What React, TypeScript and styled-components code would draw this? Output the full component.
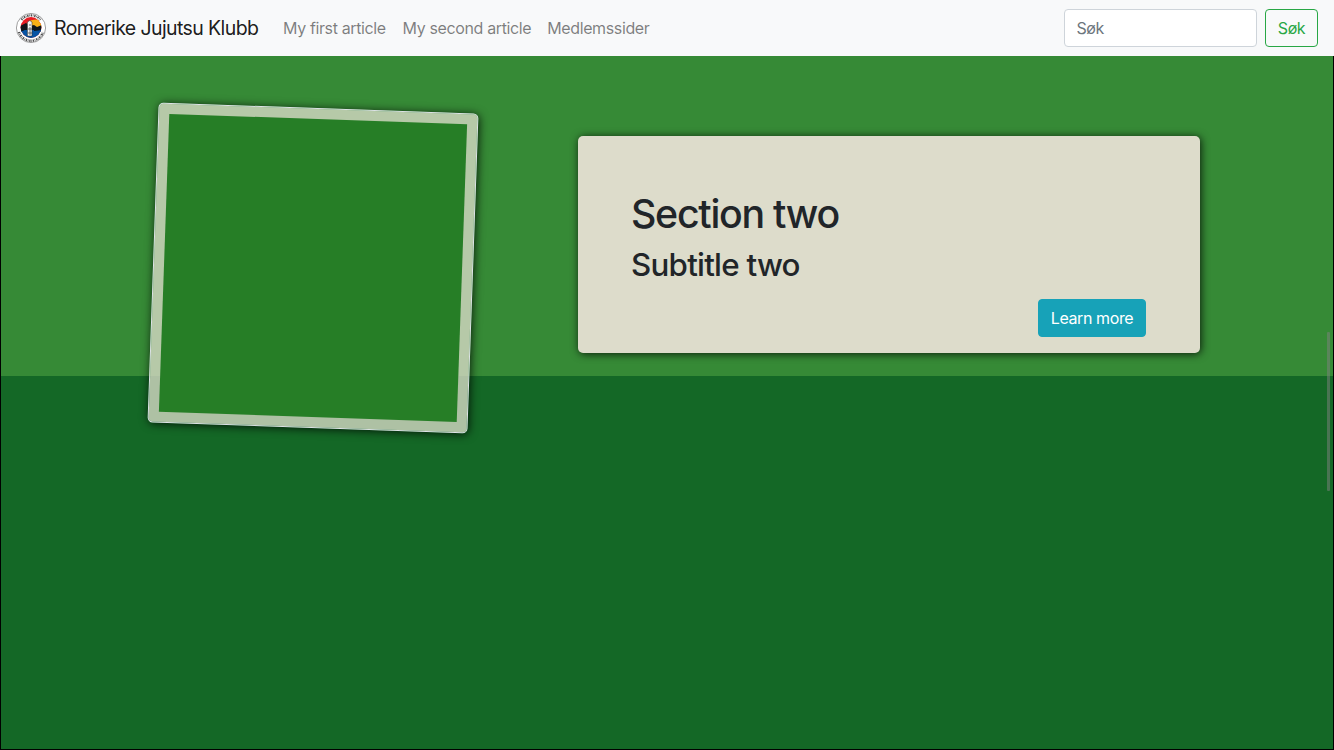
import React from 'react';
import styled, { createGlobalStyle } from 'styled-components';

const GlobalStyle = createGlobalStyle`
  *, *::before, *::after { box-sizing: border-box; }
  html, body { margin: 0; height: 100%; overflow: hidden; }
  body {
    font-family: Inter, "Liberation Sans", sans-serif;
    font-size: 16px;
    line-height: 1.5;
    color: #212529;
  }
`;

const Page = styled.div`
  height: 750px;
  display: flex;
  flex-direction: column;
`;

const Navbar = styled.nav`
  display: flex;
  align-items: center;
  height: 56px;
  flex: none;
  padding: 0 16px;
  background: #f8f9fa;
`;

const Brand = styled.a`
  display: flex;
  align-items: center;
  gap: 8px;
  width: 243px;
  margin-right: 16px;
  font-size: 19.5px;
  letter-spacing: -0.6px;
  line-height: 30px;
  white-space: nowrap;
  color: rgba(0, 0, 0, 0.9);
`;

const NavLinks = styled.div`
  display: flex;
  flex: 1;
`;

const NavLink = styled.a<{ $width: number }>`
  width: ${(p) => p.$width}px;
  padding-left: 8px;
  letter-spacing: -0.37px;
  white-space: nowrap;
  color: rgba(0, 0, 0, 0.5);
`;

const SearchForm = styled.form`
  display: flex;
  gap: 8px;
`;

const SearchInput = styled.input`
  width: 193px;
  height: 38px;
  padding: 6px 11.5px;
  border: 1px solid #ced4da;
  border-radius: 4px;
  background: #fff;
  font: inherit;
  letter-spacing: -0.4px;
  &::placeholder { color: #6c757d; opacity: 1; }
`;

const Button = styled.button<{ $variant: 'outline' | 'info' }>`
  width: ${(p) => (p.$variant === 'info' ? 108 : 53)}px;
  height: 38px;
  padding: 0;
  border: 1px solid ${(p) => (p.$variant === 'info' ? '#17a2b8' : '#28a745')};
  border-radius: 4px;
  background: ${(p) => (p.$variant === 'info' ? '#17a2b8' : 'transparent')};
  color: ${(p) => (p.$variant === 'info' ? '#fff' : '#28a745')};
  font: inherit;
  letter-spacing: -0.4px;
`;

const Content = styled.main`
  flex: 1;
  display: flex;
  flex-direction: column;
  border: 1px solid #000;
  border-top: 0;
`;

const Section = styled.section`
  display: flex;
  align-items: flex-start;
  height: 320px;
  padding-left: 152px;
  background: #368a36;
`;

const LowerSection = styled.section`
  flex: 1;
  background: #146826;
`;

const Photo = styled.div`
  position: relative;
  z-index: 1;
  flex: none;
  width: 320px;
  height: 320px;
  margin-top: 52px;
  padding: 10px;
  border: 1px solid #dee2e6;
  border-radius: 5px;
  background: rgba(221, 220, 203, 0.77);
  background-clip: padding-box;
  box-shadow: 1px 1px 10px rgba(0, 0, 0, 0.8);
  transform: rotate(2deg);
`;

const PhotoFill = styled.div`
  height: 100%;
  background: #267e26;
`;

const Card = styled.article`
  display: flex;
  flex-direction: column;
  width: 622px;
  height: 217px;
  margin: 80px 0 0 105px;
  padding: 54px 54px 16px 53px;
  border-radius: 5px;
  background: #dddccb;
  box-shadow: 1px 1px 8px rgba(0, 0, 0, 0.8);
`;

const Title = styled.h1`
  margin: 0 0 8px;
  font-size: 39.3px;
  font-weight: 500;
  line-height: 48px;
  letter-spacing: -1.27px;
`;

const Subtitle = styled.h2`
  margin: 0 0 15px;
  font-size: 31.3px;
  font-weight: 500;
  line-height: 38px;
  letter-spacing: -0.75px;
`;

const CardActions = styled.div`
  display: flex;
  justify-content: flex-end;
`;

const ScrollThumb = styled.div`
  position: fixed;
  z-index: 2;
  top: 332px;
  left: 1327px;
  width: 3px;
  height: 159px;
  border-radius: 1px;
  background: rgba(128, 128, 128, 0.5);
`;

const LogoMark = styled.svg`
  flex: none;
`;

function ClubLogo() {
  return (
    <LogoMark width="30" height="30" viewBox="0 0 30 30">
      <defs>
        <clipPath id="disc"><circle cx="15" cy="14.5" r="10.4" /></clipPath>
      </defs>
      <circle cx="15" cy="15" r="14.6" fill="#fff" stroke="#777" strokeWidth="0.7" />
      <path d="M5.4 6.8A12.6 12.6 0 0 1 24.6 6.8" fill="none" stroke="#222" strokeWidth="2.2" strokeDasharray="1.4 0.7 0.6 0.8" strokeOpacity="0.8" />
      <path d="M3 19A12.6 12.6 0 0 0 27 19" fill="none" stroke="#222" strokeWidth="2.4" strokeDasharray="1.4 0.7 0.6 0.8" strokeOpacity="0.8" />
      <g clipPath="url(#disc)">
        <rect x="4" y="4" width="22" height="22" fill="#e81c24" />
        <path d="M11 11L14 7.5Q18 6.5 22 6.5L27 14H12Z" fill="#f9b015" />
        <path d="M4 13L10 10L14 13L18 12L21 14L26 12V19H4Z" fill="#10151b" />
        <path d="M4 17H26V26H4Z" fill="#0754a4" />
        <path d="M4 16H10L7 18H4ZM18 16H26V17L18 18Z" fill="#10151b" />
      </g>
      <path d="M11.4 9L13.8 7.5L16 9V23H11.4Z" fill="#f4f4f4" stroke="#222" strokeWidth="0.5" />
      <path d="M13 12h2M13 15h2v2h-2zM13 19h2v2h-2z" fill="none" stroke="#333" strokeWidth="0.7" />
    </LogoMark>
  );
}

export default function App() {
  return (
    <Page>
      <GlobalStyle />
      <Navbar>
        <Brand><ClubLogo />Romerike Jujutsu Klubb</Brand>
        <NavLinks>
          <NavLink $width={119.6}>My first article</NavLink>
          <NavLink $width={144.6}>My second article</NavLink>
          <NavLink $width={118}>Medlemssider</NavLink>
        </NavLinks>
        <SearchForm>
          <SearchInput placeholder="Søk" />
          <Button $variant="outline" type="button">Søk</Button>
        </SearchForm>
      </Navbar>
      <Content>
        <Section>
          <Photo><PhotoFill /></Photo>
          <Card>
            <Title>Section two</Title>
            <Subtitle>Subtitle two</Subtitle>
            <CardActions><Button $variant="info" type="button">Learn more</Button></CardActions>
          </Card>
        </Section>
        <LowerSection />
      </Content>
      <ScrollThumb />
    </Page>
  );
}
